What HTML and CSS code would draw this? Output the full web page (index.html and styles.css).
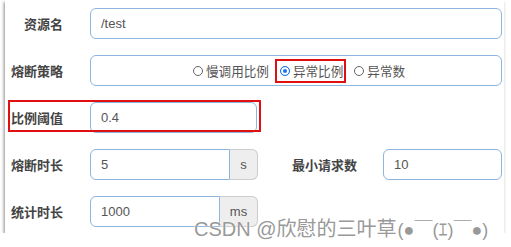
FILE: index.html
```html
<!DOCTYPE html>
<html>
<head>
    <title>熔断规则</title>
    <link rel="stylesheet" href="styles.css">
</head>
<body>
    <div class="card">
        <div class="row">
            <label class="label">资源名</label>
            <div class="field">/test</div>
        </div>

        <div class="row">
            <label class="label">熔断策略</label>
            <div class="field radios">
                <span class="opt"><i class="radio"></i>慢调用比例</span>
                <span class="opt mark"><i class="radio checked"></i>异常比例</span>
                <span class="opt"><i class="radio"></i>异常数</span>
            </div>
        </div>

        <div class="row hl-row">
            <label class="label">比例阈值</label>
            <div class="field short">0.4</div>
            <!-- red annotation box -->
            <div class="hl-box"></div>
        </div>

        <div class="row">
            <label class="label">熔断时长</label>
            <div class="group">
                <div class="field in-group">5</div>
                <span class="addon s">s</span>
            </div>
            <label class="label label-2">最小请求数</label>
            <div class="field min-req">10</div>
        </div>

        <div class="row">
            <label class="label">统计时长</label>
            <div class="group">
                <div class="field in-group">1000</div>
                <span class="addon ms">ms</span>
            </div>
        </div>
    </div>

    <div class="watermark">CSDN @欣慰的三叶草<span class="face">(●￣(ｴ)￣●)</span></div>
</body>
</html>
```

FILE: styles.css
```css
* {
    box-sizing: border-box;
}
body {
    margin: 0;
    background: #fff;
    font-family: "Liberation Sans", "Noto Sans CJK SC", sans-serif;
}
.card {
    margin-left: 5px;
    width: 499px;
    height: 233px;
    padding: 8px 2px 0 1px;
    background: #fff;
    box-shadow: -1px 2px 3px rgba(0, 0, 0, 0.45);
    display: flex;
    flex-direction: column;
    gap: 16px;
}
.row {
    display: flex;
    align-items: center;
    height: 31px;
}
.label {
    width: 57px;
    flex: none;
    text-align: right;
    font-weight: bold;
    font-size: 13px;
    color: #444;
    font-family: "Noto Sans CJK SC", sans-serif;
    margin-right: 27px;
}
.field {
    flex: 1;
    height: 31px;
    border: 1px solid #8eb5de;
    border-radius: 6px;
    padding-left: 10px;
    display: flex;
    align-items: center;
    font-size: 13px;
    color: #555;
}
.short {
    flex: none;
    width: 167px;
}
.radios {
    justify-content: center;
    padding-left: 0;
    font-family: "Noto Sans CJK SC", sans-serif;
    font-size: 12.6px;
}
.opt {
    display: flex;
    align-items: center;
    height: 24px;
    padding: 0 2px 0 4px;
    margin-left: 4px;
}
.mark {
    border: 2px solid #e01010;
    padding: 0 1px 0 3px;
}
.radio {
    width: 10px;
    height: 10px;
    border: 1px solid #666;
    border-radius: 50%;
    margin-right: 3px;
}
.radio.checked {
    border-color: #1a73e8;
    background: #1a73e8;
    box-shadow: inset 0 0 0 2px #fff;
}
.hl-row {
    position: relative;
}
.hl-box {
    position: absolute;
    left: 2px;
    top: -2px;
    width: 253px;
    height: 32px;
    border: 2px solid #e01010;
}
.group {
    display: flex;
    width: 168px;
    flex: none;
}
.in-group {
    border-radius: 6px 0 0 6px;
}
.addon {
    height: 31px;
    display: flex;
    align-items: center;
    justify-content: center;
    background: #eee;
    border: 1px solid #ccc;
    border-left: none;
    border-radius: 0 6px 6px 0;
    font-size: 13px;
    color: #555;
}
.addon.s {
    width: 28px;
}
.addon.ms {
    width: 38px;
}
.label-2 {
    width: 65px;
    margin-left: 34px;
    margin-right: 26px;
}
.min-req {
    flex: 1;
}
.watermark {
    position: absolute;
    left: 194px;
    top: 218px;
    font-size: 20px;
    line-height: 22px;
    color: #999;
    white-space: nowrap;
    text-shadow: 0 0 2px #fff, 0 0 1px #fff;
}
.face {
    font-size: 18px;
    margin-left: 1px;
}
```
